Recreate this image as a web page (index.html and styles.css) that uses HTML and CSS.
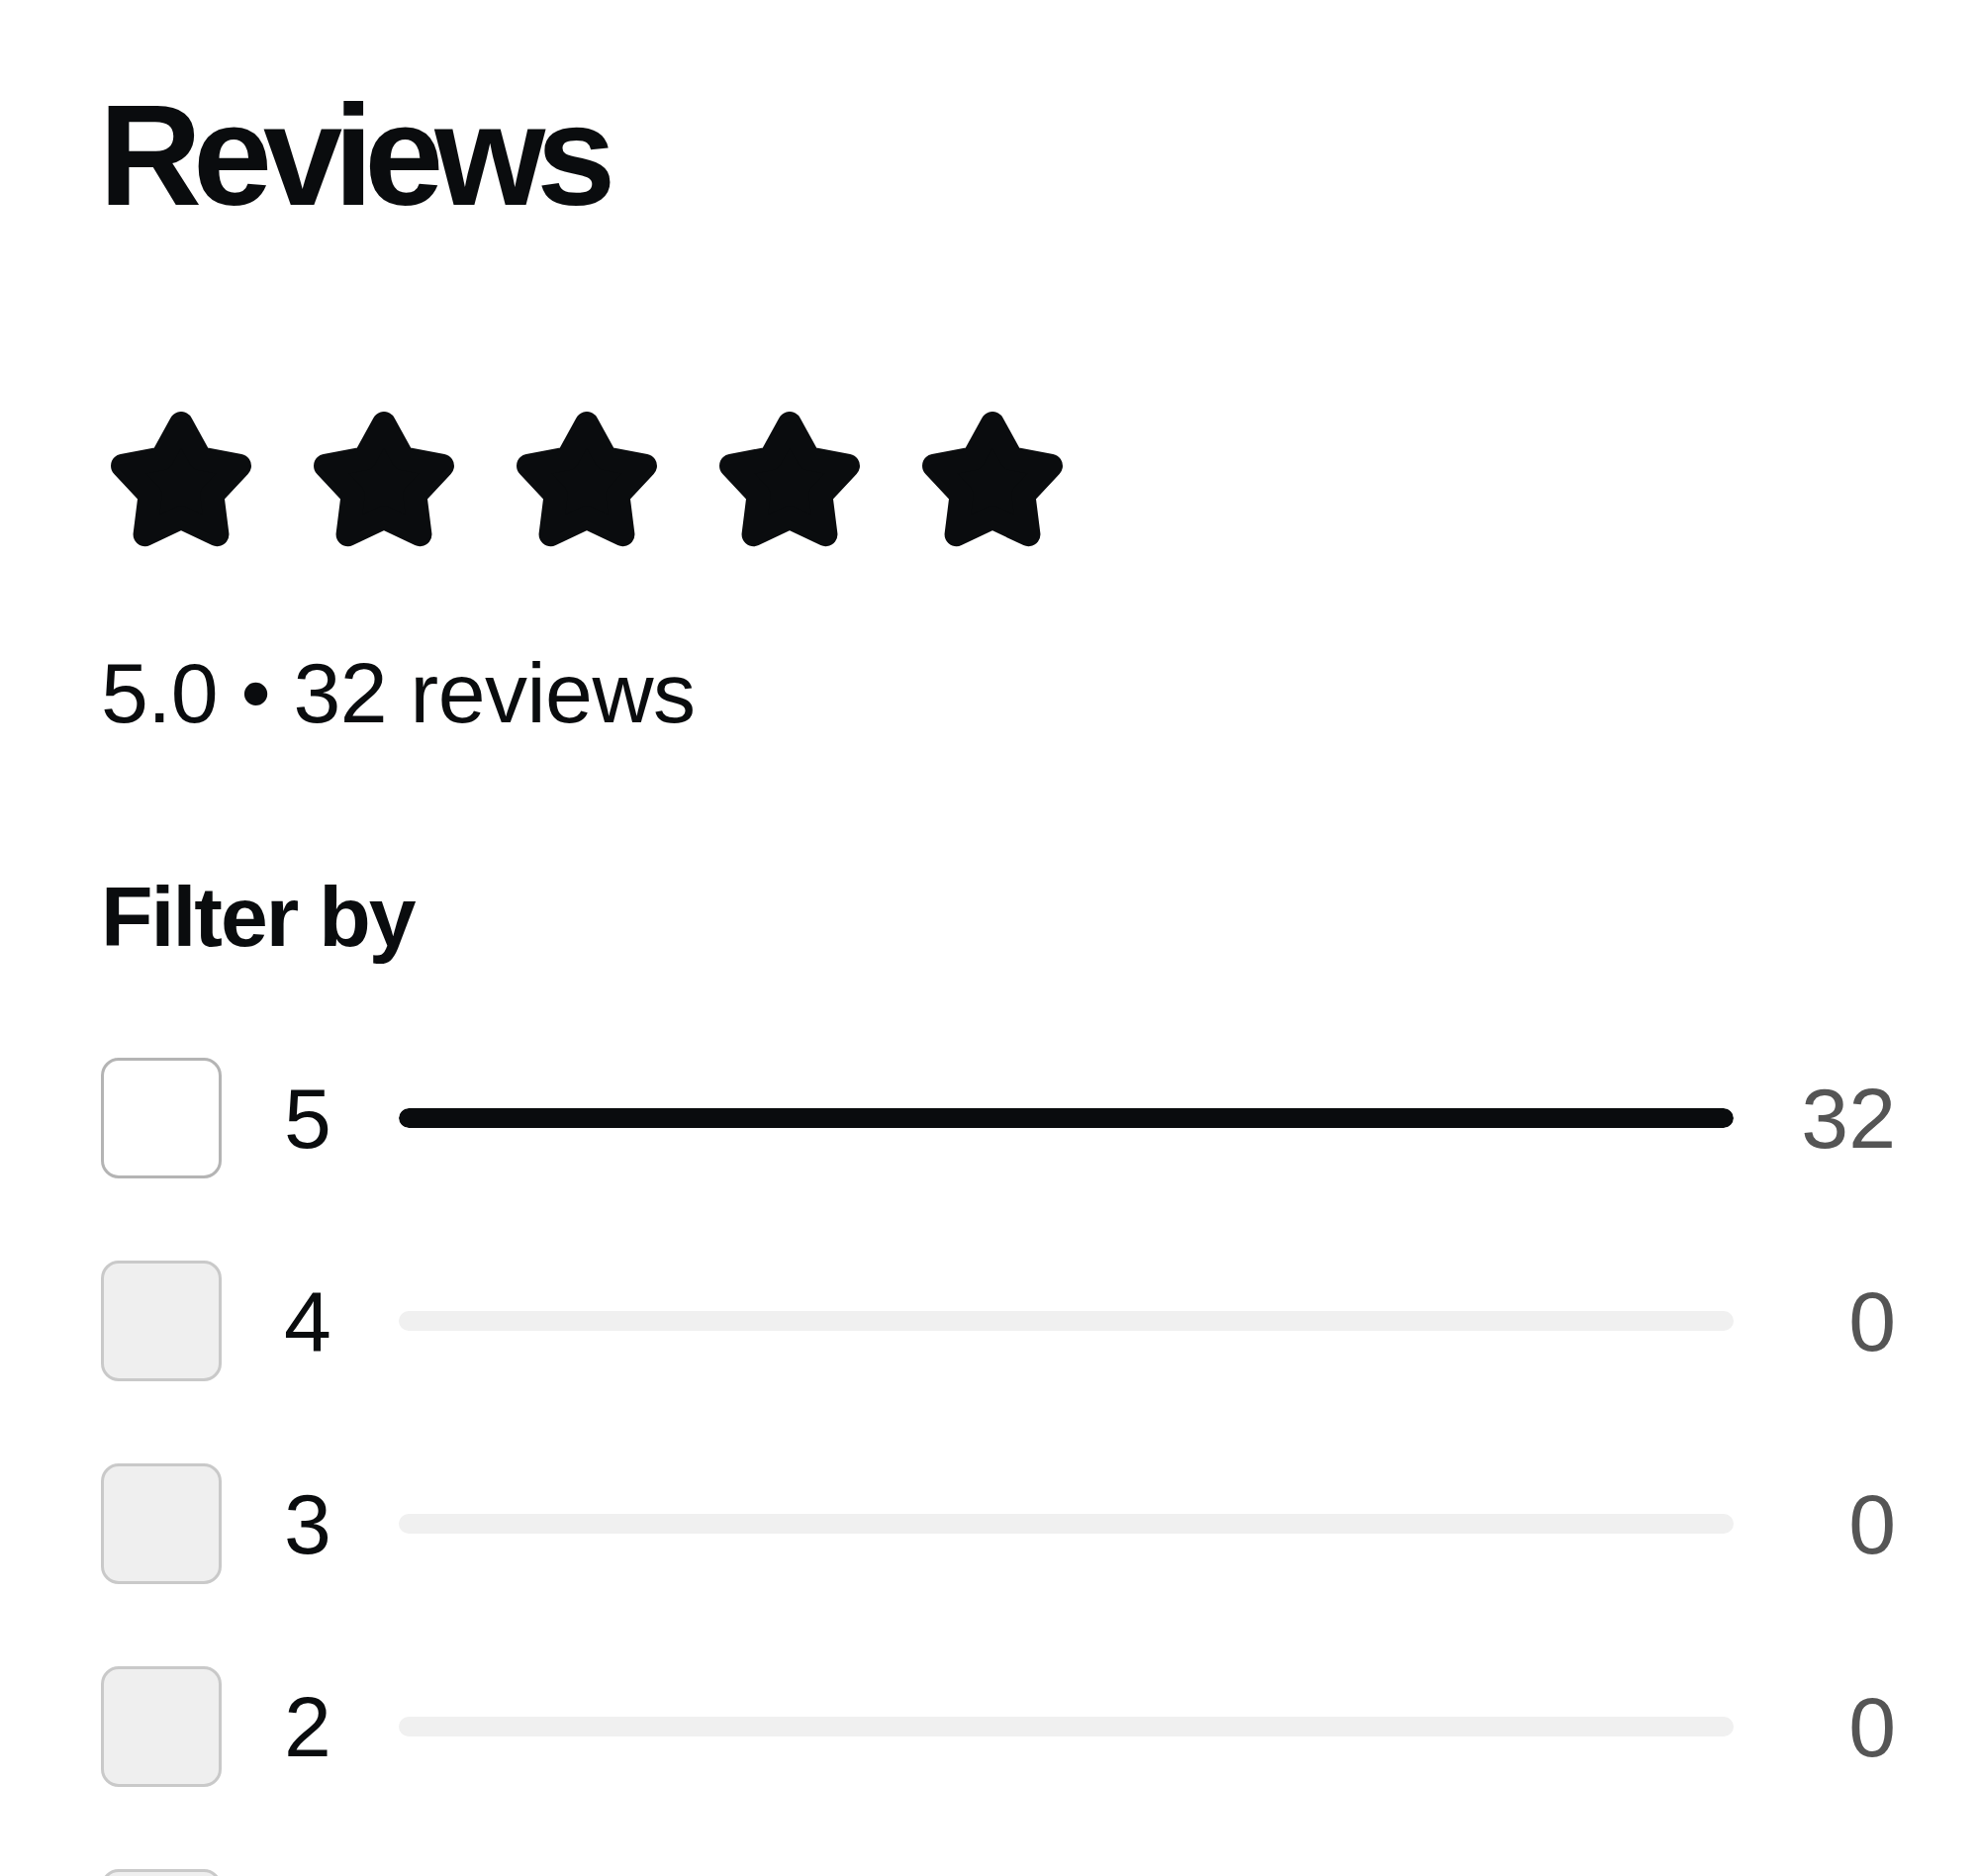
FILE: index.html
```html
<!DOCTYPE html>
<html lang="en">
<head>
    <meta charset="UTF-8">
    <meta name="viewport" content="width=device-width, initial-scale=1.0">
    <title>Reviews</title>
    <link rel="stylesheet" href="styles.css">
</head>
<body>
    <svg class="defs" width="0" height="0" aria-hidden="true">
        <symbol id="star" viewBox="0 0 145 139">
            <polygon points="72,12 91.4,47.3 130.97,54.84 103.39,84.2 108.44,124.16 72,107 35.56,124.16 40.61,84.2 13.03,54.84 52.6,47.3"
                     fill="currentColor" stroke="currentColor" stroke-width="24" stroke-linejoin="round"/>
        </symbol>
    </svg>

    <div class="reviews">
        <h1 class="reviews-title">Reviews</h1>

        <div class="stars" aria-label="5 out of 5 stars">
            <svg class="star"><use href="#star"/></svg>
            <svg class="star"><use href="#star"/></svg>
            <svg class="star"><use href="#star"/></svg>
            <svg class="star"><use href="#star"/></svg>
            <svg class="star"><use href="#star"/></svg>
        </div>

        <div class="summary">5.0 • 32 reviews</div>

        <h2 class="filter-title">Filter by</h2>

        <div class="filter-list">
            <label class="filter-row">
                <input type="checkbox" class="filter-check">
                <span class="filter-label">5</span>
                <span class="bar"><span class="bar-fill" style="width: 100%"></span></span>
                <span class="filter-count">32</span>
            </label>
            <label class="filter-row">
                <input type="checkbox" class="filter-check" disabled>
                <span class="filter-label">4</span>
                <span class="bar"><span class="bar-fill" style="width: 0%"></span></span>
                <span class="filter-count">0</span>
            </label>
            <label class="filter-row">
                <input type="checkbox" class="filter-check" disabled>
                <span class="filter-label">3</span>
                <span class="bar"><span class="bar-fill" style="width: 0%"></span></span>
                <span class="filter-count">0</span>
            </label>
            <label class="filter-row">
                <input type="checkbox" class="filter-check" disabled>
                <span class="filter-label">2</span>
                <span class="bar"><span class="bar-fill" style="width: 0%"></span></span>
                <span class="filter-count">0</span>
            </label>
            <label class="filter-row">
                <input type="checkbox" class="filter-check" disabled>
                <span class="filter-label">1</span>
                <span class="bar"><span class="bar-fill" style="width: 0%"></span></span>
                <span class="filter-count">0</span>
            </label>
        </div>
    </div>
</body>
</html>
```

FILE: styles.css
```css
:root {
    --ink: #0a0c0e;
}

body {
    margin: 0;
    background: #FFFFFF;
    color: var(--ink);
    font-family: "Liberation Sans", Arial, sans-serif;
}

.defs {
    position: absolute;
}

.reviews {
    padding: 86px 84px 0 102px;
}

.reviews-title {
    font-size: 144px;
    line-height: 144px;
    font-weight: bold;
    letter-spacing: -9px;
    margin: 0 0 0 -2px;
}

.stars {
    display: flex;
    gap: 60px;
    margin: 186px 0 0 9px;
    color: var(--ink);
}

.star {
    width: 145px;
    height: 139px;
}

.summary {
    font-size: 86px;
    line-height: 1.2;
    letter-spacing: -0.5px;
    margin-top: 94px;
}

.filter-title {
    font-size: 86px;
    line-height: 1.2;
    font-weight: bold;
    letter-spacing: -2px;
    margin: 123px 0 0;
}

.filter-list {
    display: flex;
    flex-direction: column;
    gap: 83px;
    margin-top: 91px;
}

.filter-row {
    display: flex;
    align-items: center;
    height: 122px;
}

.filter-check {
    appearance: none;
    box-sizing: border-box;
    width: 122px;
    height: 122px;
    margin: 0;
    border: 3px solid #b4b4b4;
    border-radius: 18px;
    background: #FFFFFF;
    flex-shrink: 0;
}

.filter-check:disabled {
    background: #efefef;
    border-color: #c9c9c9;
}

.filter-label {
    width: 116px;
    margin-left: 63px;
    font-size: 86px;
    line-height: 1;
}

.bar {
    flex: 1;
    height: 20px;
    border-radius: 10px;
    background: #f0f0f0;
    overflow: hidden;
}

.bar-fill {
    display: block;
    height: 100%;
    border-radius: 10px;
    background: var(--ink);
}

.filter-count {
    width: 164px;
    text-align: right;
    font-size: 86px;
    line-height: 1;
    color: #555555;
}
```
